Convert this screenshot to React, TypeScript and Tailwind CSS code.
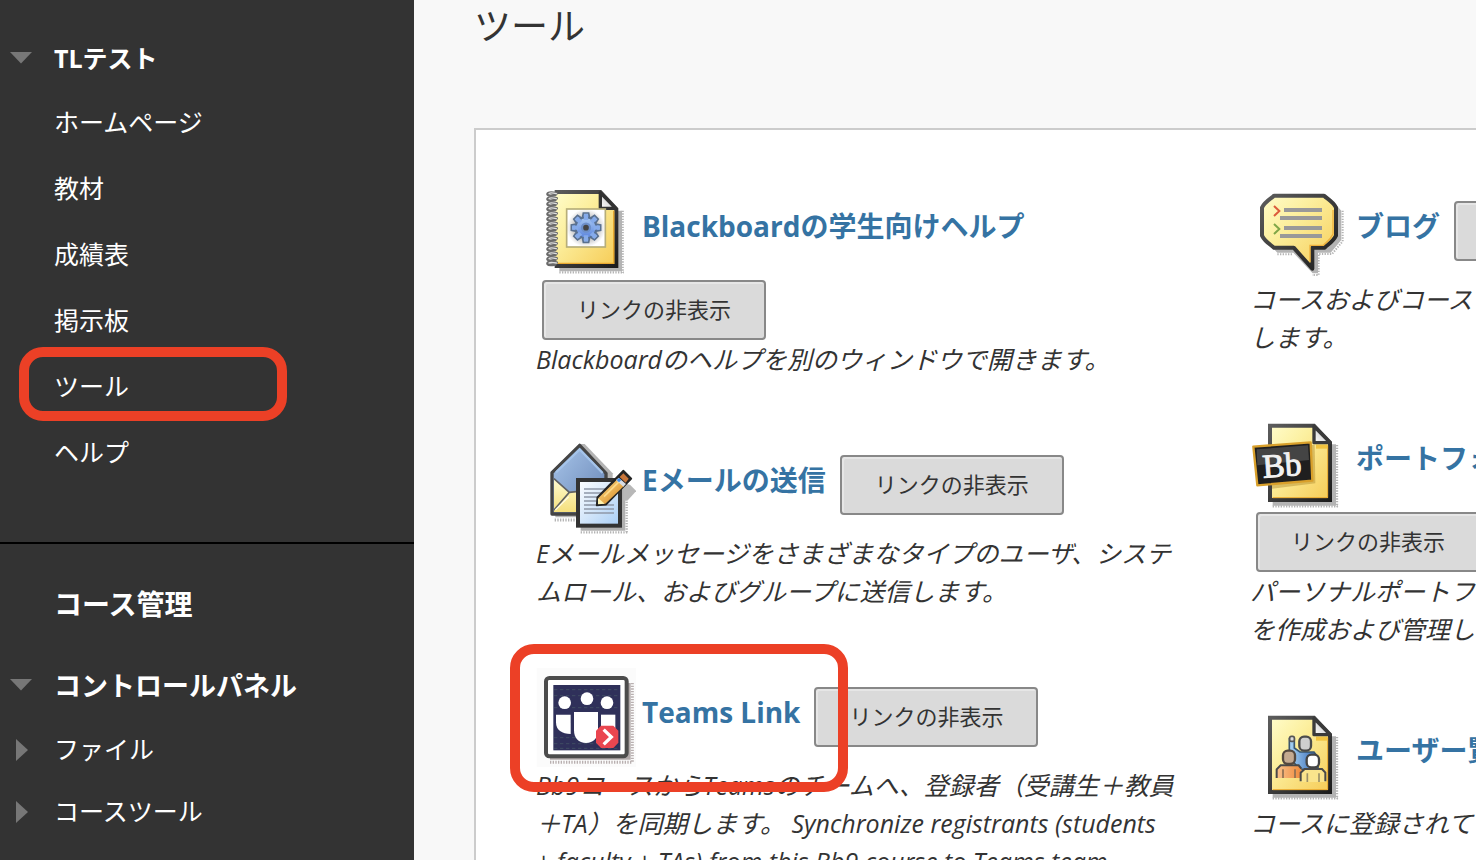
import type { ReactNode } from 'react';

const ICON = 'size-[100px] shrink-0';

function YellowFill({ id }: { id: string }) {
  return (
    <defs>
      <linearGradient id={id} x1="0" y1="0" x2="1" y2="1">
        <stop offset="0" stopColor="#fffccb" />
        <stop offset="0.35" stopColor="#fcf0a0" />
        <stop offset="1" stopColor="#f6cb55" />
      </linearGradient>
      <linearGradient id={id + '-fold'} x1="0" y1="1" x2="1" y2="0">
        <stop offset="0" stopColor="#ffffff" />
        <stop offset="1" stopColor="#b5b5b5" />
      </linearGradient>
      <linearGradient id={id + '-edge'} x1="0" y1="0" x2="1" y2="1">
        <stop offset="0" stopColor="#5c5c5c" />
        <stop offset="1" stopColor="#1c1c1c" />
      </linearGradient>
    </defs>
  );
}

function Page({ id }: { id: string }) {
  return (
    <g>
      <path d="M98 103H288V287H98Z" fill="#b4b4b4" />
      <path d="M98 289H294M291 105V290" stroke="#b4b4b4" strokeWidth="7" strokeDasharray="4 4" fill="none" />
      <path d="M90 47H222L270 98V270H90Z" fill={`url(#${id})`} stroke={`url(#${id}-edge)`} strokeWidth="12" />
      <path d="M98 263H263V106" stroke="#e9a92f" strokeWidth="3" fill="none" />
      <path d="M228 104H262V116H228Z" fill="#f2c33f" />
      <path d="M222 49V98H270Z" fill={`url(#${id}-fold)`} stroke="#3a3a3a" strokeWidth="10" strokeLinejoin="round" />
    </g>
  );
}

const SPIRAL = [42, 57, 72, 87, 102, 117, 132, 147, 162, 177, 192, 207, 222, 237, 250];
const TEETH = [0, 45, 90, 135, 180, 225, 270, 315];

function NotebookIcon() {
  return (
    <svg className={ICON} viewBox="18 3 300 300" aria-hidden="true">
      <YellowFill id="note" />
      <defs>
        <linearGradient id="gear" x1="0" y1="0" x2="0" y2="1">
          <stop offset="0" stopColor="#a9c9f2" />
          <stop offset="1" stopColor="#5a83dc" />
        </linearGradient>
        <radialGradient id="gear-bg">
          <stop offset="0" stopColor="#8a8a8a" />
          <stop offset="0.6" stopColor="#c4c4c4" />
          <stop offset="1" stopColor="#ffffff" />
        </radialGradient>
      </defs>
      <path d="M88 92H276V274H88Z" fill="#b4b4b4" />
      <path d="M88 277H282M278 92V278" stroke="#b4b4b4" strokeWidth="7" strokeDasharray="4 4" fill="none" />
      <path d="M76 36H211L259 87V258H76Z" fill="url(#note)" />
      <path d="M74 36H211L259 87V258H74" fill="none" stroke="url(#note-edge)" strokeWidth="12" />
      <path d="M84 250H251V92" stroke="#e9a92f" strokeWidth="4" fill="none" />
      <path d="M211 38V85H257Z" fill="url(#note-fold)" stroke="#333" strokeWidth="10" strokeLinejoin="round" />
      <rect x="110" y="87" width="116" height="114" fill="url(#gear-bg)" stroke="#b7ae7a" strokeWidth="5" />
      <g fill="url(#gear)" stroke="#59708f" strokeWidth="5">
        {TEETH.map((a) => (
          <path key={a} d="M157 115L160 99H176L179 115Z" transform={`rotate(${a} 168 143)`} />
        ))}
        <circle cx="168" cy="143" r="31" />
      </g>
      <g fill="#86abea">
        {TEETH.map((a) => (
          <path key={a} d="M161 120L163 102H173L175 120Z" transform={`rotate(${a} 168 143)`} />
        ))}
      </g>
      <circle cx="168" cy="143" r="12" fill="#444" stroke="#6d8fc8" strokeWidth="7" />
      {SPIRAL.map((y) => (
        <g key={y} fill="none" strokeLinecap="round">
          <path d={`M80 ${y - 2}C60 ${y - 7} 50 ${y - 3} 53 ${y + 2}S68 ${y + 5} 76 ${y + 3}`} stroke="#6a6a6a" strokeWidth="8" />
          <path d={`M79 ${y - 1}C66 ${y - 4} 59 ${y - 3} 57 ${y - 1}`} stroke="#dedede" strokeWidth="4" />
        </g>
      ))}
    </svg>
  );
}

function MailIcon() {
  return (
    <svg className={ICON} viewBox="18 15 300 300" aria-hidden="true">
      <defs>
        <linearGradient id="mail-roof" x1="0" y1="0" x2="1" y2="1">
          <stop offset="0" stopColor="#a9c6ea" />
          <stop offset="1" stopColor="#6583b4" />
        </linearGradient>
        <linearGradient id="mail-sheet" x1="0" y1="0" x2="1" y2="1">
          <stop offset="0" stopColor="#ffffff" />
          <stop offset="1" stopColor="#a8cdf5" />
        </linearGradient>
        <linearGradient id="mail-body" x1="0" y1="0" x2="0" y2="1">
          <stop offset="0" stopColor="#fffbd0" />
          <stop offset="1" stopColor="#f5df7c" />
        </linearGradient>
        <linearGradient id="mail-pencil" x1="0" y1="0" x2="1" y2="1">
          <stop offset="0" stopColor="#ffe08a" />
          <stop offset="1" stopColor="#d2801c" />
        </linearGradient>
      </defs>
      <path d="M148 42H164L248 130V262H76V130Z" fill="#b4b4b4" />
      <path d="M74 270H150" stroke="#b4b4b4" strokeWidth="9" strokeDasharray="4 4" />
      <path d="M152 160H286V302H152Z" fill="#b0b0b0" />
      <path d="M152 307H294M290 215V307" stroke="#b4b4b4" strokeWidth="7" strokeDasharray="4 4" fill="none" />
      <path d="M280 160L300 164L319 183L292 212H280Z" fill="#b8b8b8" />
      <path d="M66 128L149 46L228 130V252H66Z" fill="url(#mail-roof)" stroke="#444" strokeWidth="10" strokeLinejoin="round" />
      <path d="M78 127L149 58L218 129" fill="none" stroke="#a5c4ea" strokeWidth="7" />
      <path d="M72 148L118 188L140 182V246H72Z" fill="url(#mail-body)" />
      <path d="M72 146L118 187L72 240M118 187L146 184" stroke="#626262" strokeWidth="5" fill="none" />
      <path d="M76 240L116 200" stroke="#fffbe0" strokeWidth="4" />
      <rect x="144" y="150" width="126" height="137" fill="url(#mail-sheet)" stroke="#333" strokeWidth="12" />
      <path d="M162 177H234M162 189H222M162 201H210M162 213H206M162 225H252M162 237H252M162 249H252" stroke="#8f98a8" strokeWidth="5" />
      <path d="M200 226L202 202L280 122L304 146L228 224Z" fill="#242424" stroke="#242424" strokeWidth="5" strokeLinejoin="round" />
      <path d="M206 203L262 148L282 168L226 221L206 222Z" fill="url(#mail-pencil)" />
      <path d="M204 204L224 221L204 223Z" fill="#fff3b0" />
      <path d="M222 200L268 154" stroke="#fbd98a" strokeWidth="5" />
      <path d="M258 150L266 143L288 162L280 170Z" fill="#d9dde4" />
      <path d="M260 150L267 144L274 150L267 157Z" fill="#3b8bea" />
      <path d="M269 141L280 130L296 146L287 158Z" fill="#c9763a" />
    </svg>
  );
}

function TeamsIcon() {
  return (
    <svg className={ICON} viewBox="108 96 300 300" aria-hidden="true">
      <rect x="110" y="99" width="298" height="298" fill="#fbfbfb" />
      <path d="M150 144H392V374H150Z" fill="#b1a9a9" />
      <path d="M150 382H398M397 144V382" stroke="#b9b0b0" strokeWidth="9" strokeDasharray="4 4" fill="none" />
      <rect x="138" y="129" width="242" height="235" rx="10" fill="#fff" stroke="#4c4c4c" strokeWidth="12" />
      <rect x="160" y="150" width="201" height="196" fill="#2f305a" />
      <path d="M162 164H360M162 182H360M162 218H360M162 308H360M162 326H360M162 340H360" stroke="#3f4d63" strokeWidth="3" strokeDasharray="10 8" />
      <g fill="#fff">
        <circle cx="194" cy="203" r="19" />
        <circle cx="261" cy="191" r="19" />
        <circle cx="321" cy="203" r="19" />
        <path d="M168 239H212V297C186 297 168 286 168 262Z" />
        <path d="M222 231H294V286C294 309 280 324 258 324S222 309 222 286Z" />
        <path d="M303 239H346V284H303Z" />
      </g>
      <path d="M303 272H340L355 287V323L340 339H303L288 323V287Z" fill="#ea4650" />
      <path d="M311 284L334 306L311 328" fill="none" stroke="#fff" strokeWidth="10" />
    </svg>
  );
}

function BlogIcon() {
  return (
    <svg className={ICON} viewBox="30 3 300 300" aria-hidden="true">
      <YellowFill id="blog" />
      <path d="M112 70H284L304 92V180L272 218H234V280H218L160 218H112L86 190Z" fill="#b4b4b4" />
      <path d="M308 92V184L276 222H236V285H216M112 223H160" fill="none" stroke="#b4b4b4" strokeWidth="6" strokeDasharray="4 4" />
      <path
        d="M102 47H252C260 56 279 64 288 83V167C279 186 262 194 254 203H217V266L161 203H102C92 194 75 186 66 167V83C75 64 94 56 102 47Z"
        fill="url(#blog)"
        stroke="url(#blog-edge)"
        strokeWidth="12"
        strokeLinejoin="round"
      />
      <path d="M279 90V162C270 182 256 188 250 196H210V246" fill="none" stroke="#eeb03c" strokeWidth="4" />
      <path d="M132 90H246M120 114H246M132 144H246M120 168H246" stroke="#999" strokeWidth="12" />
      <path d="M102 78L118 93L102 108" fill="none" stroke="#dc5b3c" strokeWidth="6" />
      <path d="M102 132L118 147L102 162" fill="none" stroke="#7fa648" strokeWidth="6" />
    </svg>
  );
}

function PortfolioIcon() {
  return (
    <svg className={ICON} viewBox="30 9 300 300" aria-hidden="true">
      <YellowFill id="port" />
      <Page id="port" />
      <path d="M96 118L224 104L226 220L96 236Z" fill="#b08a2c" opacity="0.45" />
      <path d="M40 110L212 97L217 212L52 226Z" fill="#1f1f1f" stroke="#d9a02b" strokeWidth="7" strokeLinejoin="round" />
      <path d="M50 118L204 106L207 150L52 166Z" fill="#444" />
      <text
        x="70"
        y="203"
        fontFamily="Liberation Serif, serif"
        fontSize="100"
        fill="#f1f1f1"
        stroke="#f1f1f1"
        strokeWidth="3"
        transform="rotate(-4 70 203)"
      >
        Bb
      </text>
    </svg>
  );
}

function UsersIcon() {
  return (
    <svg className={ICON} viewBox="30 15 300 300" aria-hidden="true">
      <YellowFill id="users" />
      <defs>
        <linearGradient id="users-blue">
          <stop offset="0" stopColor="#a9d5f7" />
          <stop offset="1" stopColor="#2e62b0" />
        </linearGradient>
        <linearGradient id="users-orange">
          <stop offset="0" stopColor="#f9c28c" />
          <stop offset="1" stopColor="#ef8a3c" />
        </linearGradient>
      </defs>
      <g transform="translate(0 6)">
        <Page id="users" />
      </g>
      <path d="M148 116H163V144L180 156H222L234 172V208H178L148 170Z" fill="url(#users-blue)" stroke="#39566f" strokeWidth="5" />
      <rect x="149" y="109" width="14" height="15" rx="5" fill="#ddd" stroke="#555" strokeWidth="5" />
      <rect x="178" y="110" width="35" height="42" rx="14" fill="#cfcfcf" stroke="#4b4b4b" strokeWidth="7" />
      <path d="M110 234V208L122 196H176L184 206V234Z" fill="url(#users-orange)" />
      <path d="M110 234V208L122 196H176L184 206" fill="none" stroke="#494949" strokeWidth="6" />
      <path d="M129 208V234M165 208V234" stroke="#8d6f52" strokeWidth="5" />
      <rect x="129" y="152" width="36" height="40" rx="14" fill="#c4a990" stroke="#54483f" strokeWidth="7" />
      <path d="M182 246V218L194 207H246L256 218V246Z" fill="#fae48c" />
      <path d="M182 244V218L194 207H246L256 218V244" fill="none" stroke="#494949" strokeWidth="6" />
      <path d="M202 220V246M237 220V246" stroke="#9b9068" strokeWidth="5" />
      <rect x="200" y="164" width="37" height="38" rx="14" fill="#fff" stroke="#444" strokeWidth="7" />
    </svg>
  );
}

function HideButton() {
  return (
    <button
      type="button"
      className="h-[60px] w-56 shrink-0 rounded border-2 border-[#888] bg-[#dadada] pb-0.5 text-[22px] text-[#333] shadow-[inset_2px_2px_0_#e6e6e6]"
    >
      リンクの非表示
    </button>
  );
}

type ToolProps = {
  icon: ReactNode;
  name: string;
  lines: string[];
  button?: 'inline' | 'below';
  marked?: boolean;
};

function Tool({ icon, name, lines, button, marked }: ToolProps) {
  return (
    <li>
      <div className="relative flex h-[98px] w-max items-center">
        {icon}
        <h2 className="mr-3.5 ml-1.5 pb-2.5 text-[28px] leading-9 font-bold text-[#3573a3]">
          <a href="#">{name}</a>
        </h2>
        {button === 'inline' && <HideButton />}
        {marked && (
          <span className="pointer-events-none absolute -top-6 -left-[26px] h-[148px] w-[338px] rounded-3xl border-10 border-[#ec4026]" />
        )}
      </div>
      {button === 'below' && (
        <div className="flex pl-1.5">
          <HideButton />
        </div>
      )}
      <p className="text-[25px] leading-[38px] whitespace-nowrap text-[#333] italic">
        {lines.map((line) => (
          <span key={line} className="block">
            {line}
          </span>
        ))}
      </p>
    </li>
  );
}

function Arrow({ open }: { open: boolean }) {
  return (
    <svg className="ml-2.5 size-[22px] shrink-0" viewBox="0 0 22 22" fill="#777" aria-hidden="true">
      {open ? <path d="M0 4H22L11 15.500Z" /> : <path d="M6 0V22L18 11Z" />}
    </svg>
  );
}

const MENU = ['ホームページ', '教材', '成績表', '掲示板', 'ツール', 'ヘルプ'];

export default function App() {
  return (
    <div className="flex h-screen overflow-hidden bg-[#f8f8f8] font-['Open_Sans','Noto_Sans_CJK_JP',sans-serif]">
      <nav className="w-[414px] shrink-0 bg-[#333] text-[25px] text-white">
        <section className="border-b-2 border-black pt-7 pb-14">
          <h2 className="flex h-[62px] items-center gap-[22px] font-bold">
            <Arrow open />
            <a href="#">TLテスト</a>
          </h2>
          <ul>
            {MENU.map((item) => (
              <li key={item} className="relative flex h-[66px] items-center pl-[54px]">
                <a href="#">{item}</a>
                {item === 'ツール' && (
                  <span className="pointer-events-none absolute -top-[7px] left-[19px] h-[74px] w-[268px] rounded-3xl border-10 border-[#ec4026]" />
                )}
              </li>
            ))}
          </ul>
        </section>
        <section className="pt-[27px]">
          <h2 className="mb-4 flex h-[66px] items-center pl-[54px] text-[28px] font-bold">コース管理</h2>
          <h3 className="flex h-[66px] items-center gap-[22px] text-[27px] font-bold">
            <Arrow open />
            <a href="#">コントロールパネル</a>
          </h3>
          <ul>
            {['ファイル', 'コースツール'].map((item) => (
              <li key={item} className="flex h-[62px] items-center gap-[22px]">
                <Arrow open={false} />
                <a href="#">{item}</a>
              </li>
            ))}
          </ul>
        </section>
      </nav>

      <main className="min-w-0 flex-1 overflow-hidden pl-[60px]">
        <h1 className="h-32 text-[37px] leading-[52px] text-[#333]">ツール</h1>
        <div className="grid w-max grid-cols-[654px_654px] gap-x-[60px] border-2 border-[#ccc] bg-white px-[60px] pt-[52px] pb-16">
          <ul className="flex flex-col gap-[58px]">
            <Tool icon={<NotebookIcon />} name="Blackboardの学生向けヘルプ" button="below" lines={['Blackboardのヘルプを別のウィンドウで開きます。']} />
            <Tool
              icon={<MailIcon />}
              name="Eメールの送信"
              button="inline"
              lines={['Eメールメッセージをさまざまなタイプのユーザ、システ', 'ムロール、およびグループに送信します。']}
            />
            <Tool
              icon={<TeamsIcon />}
              name="Teams Link"
              button="inline"
              marked
              lines={[
                'Bb9コースからTeamsのチームへ、登録者（受講生＋教員',
                '＋TA）を同期します。 Synchronize registrants (students',
                '+ faculty + TAs) from this Bb9 course to Teams team.',
              ]}
            />
          </ul>
          <ul className="flex flex-col gap-[58px]">
            <Tool icon={<BlogIcon />} name="ブログ" button="inline" lines={['コースおよびコース', 'します。']} />
            <Tool icon={<PortfolioIcon />} name="ポートフォリオ" button="below" lines={['パーソナルポートフォリオ', 'を作成および管理します。']} />
            <Tool icon={<UsersIcon />} name="ユーザー覧" lines={['コースに登録されている']} />
          </ul>
        </div>
      </main>
    </div>
  );
}
